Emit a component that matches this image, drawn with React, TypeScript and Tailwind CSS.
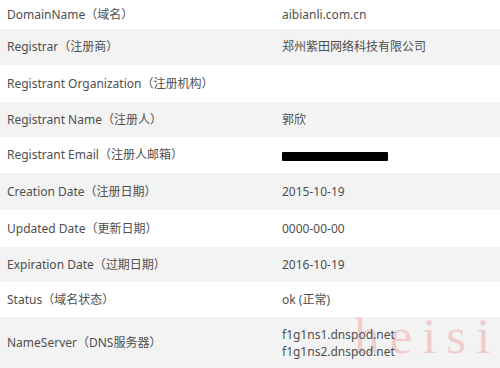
const rows: { label: string; value: React.ReactNode; h: string }[] = [
  { label: "DomainName（域名）", value: "aibianli.com.cn", h: "h-[29px]" },
  { label: "Registrar（注册商）", value: "郑州紫田网络科技有限公司", h: "h-[36px]" },
  { label: "Registrant Organization（注册机构）", value: "", h: "h-[37px]" },
  { label: "Registrant Name（注册人）", value: "郭欣", h: "h-[35px]" },
  {
    label: "Registrant Email（注册人邮箱）",
    value: <span className="block w-[106px] h-[9px] mt-[2px] bg-black rounded-[1px]" />,
    h: "h-[36px]",
  },
  { label: "Creation Date（注册日期）", value: "2015-10-19", h: "h-[37px]" },
  { label: "Updated Date（更新日期）", value: "0000-00-00", h: "h-[37px]" },
  { label: "Expiration Date（过期日期）", value: "2016-10-19", h: "h-[35px]" },
  { label: "Status（域名状态）", value: "ok (正常)", h: "h-[35px]" },
  {
    label: "NameServer（DNS服务器）",
    value: (
      <span className="flex flex-col leading-[17px]">
        <span>f1g1ns1.dnspod.net</span>
        <span>f1g1ns2.dnspod.net</span>
      </span>
    ),
    h: "h-[51px]",
  },
];

export default function App() {
  return (
    <div
      className="relative w-[500px] h-[368px] overflow-hidden bg-white text-[12px] text-[#4f4f4f]"
      style={{ fontFamily: '"Noto Sans", "Noto Sans CJK SC", sans-serif' }}
    >
      {rows.map((row, i) => (
        <div
          key={row.label}
          className={`flex items-center ${row.h} ${i % 2 === 1 ? "bg-[#f3f3f3]" : "bg-white"}`}
        >
          <div className="w-[282px] pl-[7px] whitespace-nowrap">{row.label}</div>
          <div className="relative z-10 flex-1 whitespace-nowrap">{row.value}</div>
        </div>
      ))}
      <div
        className="absolute left-[354px] top-[311px] text-[51px] tracking-[10px] text-[#eeb4b4]/60 leading-none pointer-events-none"
        style={{ fontFamily: '"Liberation Serif", serif' }}
      >
        heisi
      </div>
    </div>
  );
}
